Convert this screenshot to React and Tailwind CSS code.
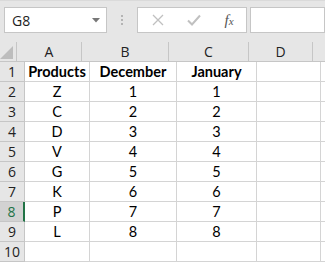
import React from 'react';

const cols = [
  { key: 'A', w: 'w-[65px]' },
  { key: 'B', w: 'w-[87px]' },
  { key: 'C', w: 'w-[80px]' },
  { key: 'D', w: 'w-[64px]' },
  { key: 'E', w: 'w-[60px]' },
];

const rows = [
  ['Products', 'December', 'January'],
  ['Z', '1', '1'],
  ['C', '2', '2'],
  ['D', '3', '3'],
  ['V', '4', '4'],
  ['G', '5', '5'],
  ['K', '6', '6'],
  ['P', '7', '7'],
  ['L', '8', '8'],
  ['', '', ''],
];

const App = () => {
  return (
    <div className="w-[325px] h-[262px] overflow-hidden bg-white font-['Lato','Open_Sans',sans-serif]">
      {/* formula bar */}
      <div className="h-[42px] bg-[#e6e6e6] border-t border-[#dadada] flex items-start pt-[6px] pl-[4px]">
        <div className="w-[103px] h-[26px] bg-white border border-[#c6c6c6] flex items-center pl-[7px] pr-[6px]">
          <span className="text-[14px] text-[#222] font-['Open_Sans',sans-serif] flex-1">G8</span>
          <svg width="8" height="5" viewBox="0 0 8 5"><path d="M0 0h8L4 4.5z" fill="#777" /></svg>
        </div>
        <div className="w-[30px] h-[26px] flex flex-col items-center justify-center gap-[2px]">
          <span className="w-[2px] h-[2px] bg-[#b4b4b4]" />
          <span className="w-[2px] h-[2px] bg-[#b4b4b4]" />
          <span className="w-[2px] h-[2px] bg-[#b4b4b4]" />
        </div>
        <div className="w-[110px] h-[26px] bg-white border border-[#c6c6c6] flex items-center">
          <div className="w-[40px] flex justify-center">
            <svg width="12" height="12" viewBox="0 0 12 12"><path d="M1 1L11 11M11 1L1 11" stroke="#c0c0c0" strokeWidth="1.3" /></svg>
          </div>
          <div className="w-[32px] flex justify-center">
            <svg width="14" height="12" viewBox="0 0 14 12"><path d="M1 6.5L5 10.5L13 1.5" stroke="#c0c0c0" strokeWidth="2" fill="none" /></svg>
          </div>
          <div className="flex-1 flex justify-center pl-[2px]">
            <span className="font-['Liberation_Serif',serif] italic text-[15px] text-[#555] leading-none">
              f<span className="text-[11px]">x</span>
            </span>
          </div>
        </div>
        <div className="ml-[3px] flex-1 h-[26px] bg-white border border-[#c6c6c6]" />
      </div>

      {/* column headers */}
      <div className="flex h-[20px] bg-[#e6e6e6] border-b border-[#c6c6c6]">
        <div className="w-[25px] border-r border-[#c6c6c6] relative flex items-end justify-end pr-[3px] pb-[2px]">
          <svg width="13" height="13" viewBox="0 0 13 13"><path d="M13 0V13H0z" fill="#bdbdbd" /></svg>
        </div>
        {cols.map((c) => (
          <div key={c.key} className={`${c.w} shrink-0 border-r border-[#c6c6c6] flex items-center justify-center text-[14px] text-[#222] font-['Open_Sans',sans-serif]`}>
            {c.key === 'E' ? '' : c.key}
          </div>
        ))}
      </div>

      {/* rows */}
      {rows.map((r, i) => {
        const active = i === 7;
        return (
          <div key={i} className="flex h-[20px]">
            <div
              className={
                active
                  ? "w-[25px] shrink-0 bg-[#d2d2d2] border-b border-[#c6c6c6] border-r-2 border-r-[#217346] flex items-center justify-center text-[14px] text-[#217346] font-['Open_Sans',sans-serif]"
                  : "w-[25px] shrink-0 bg-[#e6e6e6] border-b border-r border-[#c6c6c6] flex items-center justify-center text-[14px] text-[#222] font-['Open_Sans',sans-serif]"
              }
            >
              {i + 1}
            </div>
            {cols.map((c, j) => (
              <div
                key={c.key}
                className={`${c.w} shrink-0 border-r border-b border-[#d4d4d4] flex items-center justify-center text-[14.5px] text-black ${i === 0 ? 'font-bold' : ''}`}
              >
                {r[j] || ''}
              </div>
            ))}
          </div>
        );
      })}
    </div>
  );
};

export default App;
